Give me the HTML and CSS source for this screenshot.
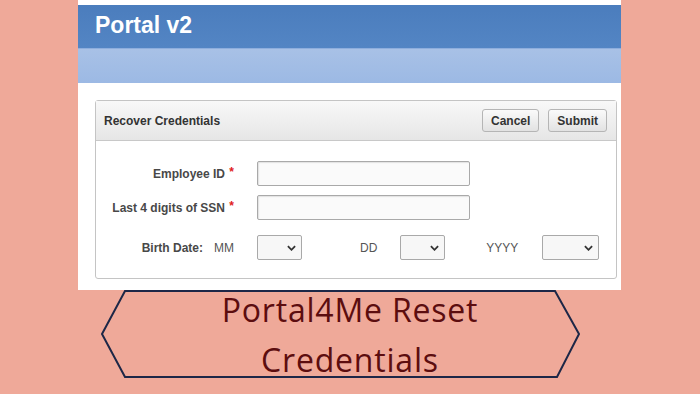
FILE: index.html
```html
<!DOCTYPE html>
<html lang="en">
<head>
  <meta charset="UTF-8" />
  <title>Portal4Me Reset Credentials</title>
  <link rel="stylesheet" href="styles.css">
</head>
<body>

  <div class="shot">
    <header class="portal-head">
      <h1>Portal v2</h1>
    </header>
    <div class="portal-band"></div>

    <div class="portal-body">
      <div class="panel">
        <div class="panel-head">
          <h2>Recover Credentials</h2>
          <div class="actions">
            <button class="btn">Cancel</button>
            <button class="btn">Submit</button>
          </div>
        </div>

        <form class="panel-form">
          <div class="row">
            <label class="lbl">Employee ID <span class="req">*</span></label>
            <input type="text" class="field">
          </div>
          <div class="row">
            <label class="lbl">Last 4 digits of SSN <span class="req">*</span></label>
            <input type="text" class="field">
          </div>
          <div class="row birth">
            <label class="lbl">Birth Date:<span class="part first">MM</span></label>
            <span class="sel sel-sm"><select></select><svg viewBox="0 0 10 6"><path d="M1 1 L5 5 L9 1" /></svg></span>
            <span class="part dd">DD</span>
            <span class="sel sel-sm"><select></select><svg viewBox="0 0 10 6"><path d="M1 1 L5 5 L9 1" /></svg></span>
            <span class="part yy">YYYY</span>
            <span class="sel sel-lg"><select></select><svg viewBox="0 0 10 6"><path d="M1 1 L5 5 L9 1" /></svg></span>
          </div>
        </form>
      </div>
    </div>
  </div>

  <div class="banner">
    <svg class="hex" viewBox="0 0 482 90">
      <polygon points="25,1 455,1 479,44 457,87 25,87 2,44" />
    </svg>
    <p>Portal4Me Reset<br>Credentials</p>
  </div>

</body>
</html>
```

FILE: styles.css
```css
body {
  margin: 0;
  background: #efa999;
  font-family: "Liberation Sans", Arial, sans-serif;
  overflow: hidden;
}

.shot {
  margin-left: 78px;
  width: 543px;
  height: 290px;
  padding-top: 5px;
  box-sizing: border-box;
  background: #fff;
}

.portal-head {
  height: 43px;
  background: linear-gradient(#4b7dbd, #5385c4);
  padding-left: 17px;
  display: flex;
  align-items: center;
}

.portal-head h1 {
  margin: 0;
  color: #fff;
  font-size: 23px;
  font-weight: bold;
  padding-bottom: 2px;
}

.portal-band {
  height: 35px;
  background: linear-gradient(#a8c1e6, #9cb9e4);
  border-top: 1px solid #8eaedd;
  box-sizing: border-box;
}

.portal-body {
  padding: 17px 4px 0 17px;
}

.panel {
  height: 179px;
  border: 1px solid #c4c4c4;
  border-radius: 3px;
  box-sizing: border-box;
}

.panel-head {
  height: 39px;
  display: flex;
  align-items: center;
  justify-content: space-between;
  padding: 0 9px 0 8px;
  background: linear-gradient(#f8f8f8, #e6e6e6);
  border-bottom: 1px solid #c8c8c8;
}

.panel-head h2 {
  margin: 0;
  font-size: 12px;
  font-weight: bold;
  color: #333;
}

.actions {
  display: flex;
  gap: 9px;
}

.btn {
  height: 23px;
  padding: 0 8px;
  font-family: "Liberation Sans", Arial, sans-serif;
  font-size: 12px;
  font-weight: bold;
  color: #333;
  background: linear-gradient(#fafafa, #e2e2e2);
  border: 1px solid #b5b5b5;
  border-radius: 3px;
}

.panel-form {
  padding-top: 20px;
  display: flex;
  flex-direction: column;
  gap: 9px;
}

.row {
  display: flex;
  align-items: center;
}

.lbl {
  width: 142px;
  box-sizing: border-box;
  padding-right: 4px;
  margin-right: 19px;
  text-align: right;
  font-size: 12px;
  font-weight: bold;
  color: #484848;
}

.req {
  color: #e02020;
  position: relative;
  top: -2px;
  margin-left: 1px;
}

.field {
  width: 213px;
  height: 25px;
  box-sizing: border-box;
  border: 1px solid #a9a9a9;
  border-radius: 2px;
  background: #fafafa;
  box-shadow: inset 1px 1px 1px #e2e2e2;
}

.birth {
  margin-top: 6px;
}

.part {
  font-size: 12px;
  font-weight: normal;
  color: #555;
}

.part.first {
  margin-left: 11px;
}

.part.dd {
  margin: 0 23px 0 58px;
}

.part.yy {
  margin: 0 24px 0 41px;
}

.sel {
  position: relative;
  display: block;
  height: 25px;
}

.sel-sm { width: 45px; }
.sel-lg { width: 57px; }

.sel select {
  appearance: none;
  width: 100%;
  height: 100%;
  border: 1px solid #a9a9a9;
  border-radius: 2px;
  background: #f7f7f7;
}

.sel svg {
  position: absolute;
  right: 6px;
  top: 10px;
  width: 9px;
  height: 6px;
  fill: none;
  stroke: #333;
  stroke-width: 2;
}

.banner {
  position: relative;
  margin-left: 100px;
  width: 482px;
  height: 90px;
}

.hex {
  position: absolute;
  left: 0;
  top: 0;
  width: 482px;
  height: 90px;
}

.hex polygon {
  fill: none;
  stroke: #1d2747;
  stroke-width: 2;
}

.banner p {
  position: relative;
  top: -5px;
  margin: 0;
  padding-left: 18px;
  text-align: center;
  font-family: "Open Sans", sans-serif;
  font-size: 32px;
  letter-spacing: 0.8px;
  line-height: 50px;
  color: #5c0d0f;
}
```
